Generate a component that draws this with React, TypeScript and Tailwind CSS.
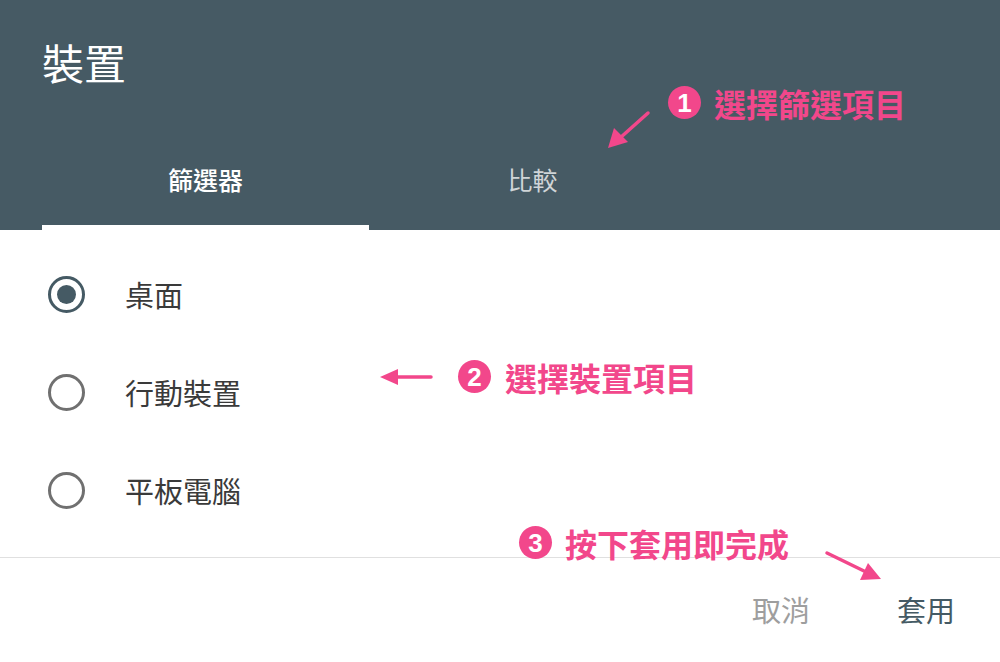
import React from "react";

const font = { fontFamily: '"Noto Sans CJK TC", "Noto Sans", sans-serif' };

function Radio({ checked, label }: { checked?: boolean; label: string }) {
  return (
    <div className="flex h-[98px] items-center">
      <div
        className={
          "ml-[48px] flex h-[37px] w-[37px] items-center justify-center rounded-full border-[3.5px] " +
          (checked ? "border-[#455a64]" : "border-[#707070]")
        }
      >
        {checked && <div className="h-[19px] w-[19px] rounded-full bg-[#455a64]" />}
      </div>
      <span className="ml-[40px] text-[29px] leading-none text-[#3a3a3a]">{label}</span>
    </div>
  );
}

function Badge({ n }: { n: string }) {
  return (
    <span className="flex h-[33px] w-[33px] items-center justify-center rounded-full bg-[#f2478b] text-[26px] font-bold leading-none text-white" style={{ fontFamily: '"Liberation Sans", sans-serif' }}>
      {n}
    </span>
  );
}

export default function App() {
  return (
    <div className="relative h-[662px] w-[1000px] overflow-hidden bg-white" style={font}>
      {/* header */}
      <div className="flex h-[230px] flex-col justify-between bg-[#465a64]">
        <div className="pl-[42px] pt-[41px] text-[42px] leading-none text-white">裝置</div>
        <div className="flex pl-[42px]">
          <div className="flex h-[75px] w-[327px] justify-center border-b-[5px] border-white pt-[10px]">
            <span className="text-[25px] font-medium leading-[28px] text-white">篩選器</span>
          </div>
          <div className="flex h-[75px] w-[327px] justify-center pt-[10px]">
            <span className="text-[25px] leading-[28px] text-white/75">比較</span>
          </div>
        </div>
      </div>

      {/* body */}
      <div className="flex h-[327px] flex-col pt-[15px]">
        <Radio checked label="桌面" />
        <Radio label="行動裝置" />
        <Radio label="平板電腦" />
      </div>

      {/* footer */}
      <div className="flex h-[105px] items-center justify-end gap-[87px] border-t border-[#e0e0e0] pb-[2px] pr-[45px]">
        <span className="text-[29px] leading-none text-[#9e9e9e]">取消</span>
        <span className="text-[29px] leading-none text-[#455a64]">套用</span>
      </div>

      {/* annotations */}
      <div className="absolute left-[668px] top-[86px] flex items-center gap-[13px]">
        <Badge n="1" />
        <span className="text-[32px] font-bold leading-none text-[#f2478b]">選擇篩選項目</span>
      </div>
      <div className="absolute left-[458px] top-[360px] flex items-center gap-[14px]">
        <Badge n="2" />
        <span className="text-[32px] font-bold leading-none text-[#f2478b]">選擇裝置項目</span>
      </div>
      <div className="absolute left-[519px] top-[526px] flex items-center gap-[13px]">
        <Badge n="3" />
        <span className="text-[32px] font-bold leading-none text-[#f2478b]">按下套用即完成</span>
      </div>

      <svg className="absolute left-0 top-0" width="1000" height="662" viewBox="0 0 1000 662">
        <g stroke="#f2478b" strokeWidth="3.5" strokeLinecap="round" fill="#f2478b">
          <line x1="648" y1="113" x2="620" y2="138" />
          <polygon points="608,148 614,128 628,142" stroke="none" />
          <line x1="431" y1="377" x2="396" y2="377" />
          <polygon points="380,377 398,369 398,385" stroke="none" />
          <line x1="827" y1="553" x2="864" y2="571" />
          <polygon points="881,579 860,580 868,563" stroke="none" />
        </g>
      </svg>
    </div>
  );
}
